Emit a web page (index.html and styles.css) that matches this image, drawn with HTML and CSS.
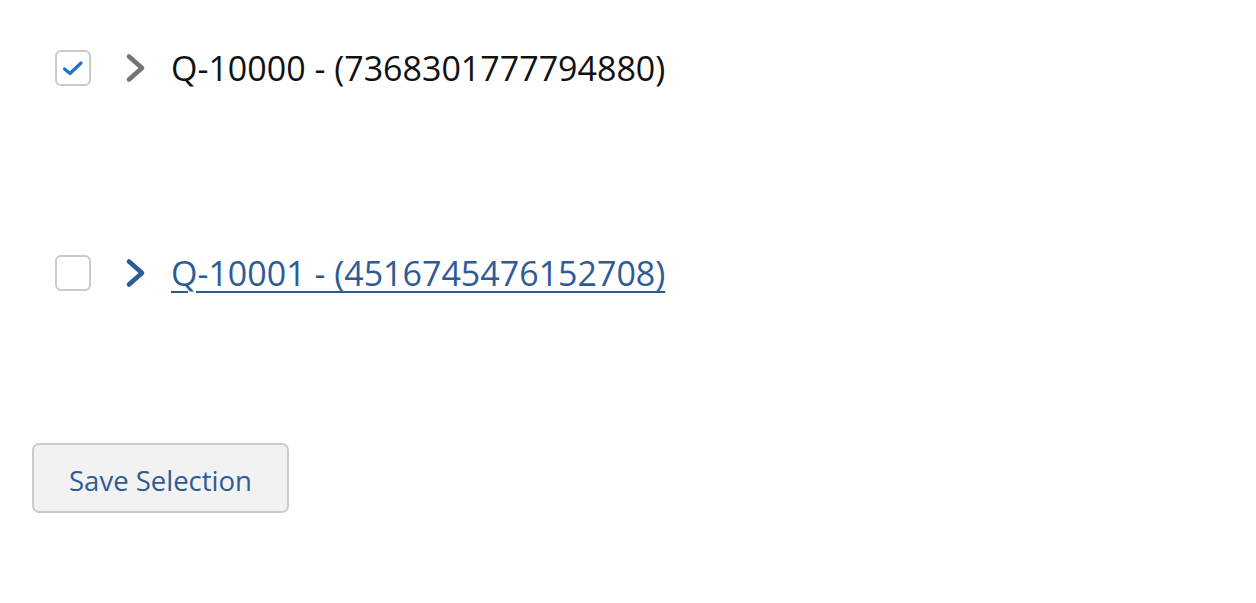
FILE: index.html
```html
<!DOCTYPE html>
<html>
<head>
<meta charset="utf-8">
<link rel="stylesheet" href="styles.css">
</head>
<body>
<div class="page">
  <ul class="tree">
    <li class="row">
      <span class="check checked">
        <svg width="22" height="18" viewBox="0 0 22 18"><path d="M2.5 10 L8 14.5 L19 4" fill="none" stroke="#1b72c8" stroke-width="3.2" stroke-linecap="round" stroke-linejoin="round"/></svg>
      </span>
      <span class="chev grey">
        <svg width="22" height="30" viewBox="0 0 22 30"><path d="M4 3.5 L17 15 L4 26.5" fill="none" stroke="currentColor" stroke-width="4.6" stroke-linecap="round" stroke-linejoin="round"/></svg>
      </span>
      <span class="label">Q-10000 - (7368301777794880)</span>
    </li>
    <li class="row">
      <span class="check"></span>
      <span class="chev blue">
        <svg width="22" height="30" viewBox="0 0 22 30"><path d="M4 3.5 L17 15 L4 26.5" fill="none" stroke="currentColor" stroke-width="4.6" stroke-linecap="round" stroke-linejoin="round"/></svg>
      </span>
      <a class="label link" href="#">Q-10001 - (4516745476152708)</a>
    </li>
  </ul>
  <button class="save">Save Selection</button>
</div>
</body>
</html>
```
FILE: styles.css
```css
html, body {
  margin: 0;
  padding: 0;
  background: #fff;
}
body {
  font-family: "Open Sans", "Noto Sans", sans-serif;
}
.page {
  padding: 50px 0 0 32px;
}
.tree {
  list-style: none;
  margin: 0;
  padding: 0 0 0 23px;
  display: flex;
  flex-direction: column;
  gap: 169px;
}
.row {
  display: flex;
  align-items: center;
  height: 36px;
}
.check {
  box-sizing: border-box;
  width: 36px;
  height: 36px;
  border: 2px solid #cbcbcb;
  border-radius: 6px;
  background: #fff;
  display: flex;
  align-items: center;
  justify-content: center;
  flex-shrink: 0;
}
.chev {
  margin-left: 34px;
  width: 22px;
  height: 30px;
  display: flex;
  flex-shrink: 0;
}
.chev.grey { color: #767676; }
.chev.blue { color: #2e5b97; }
.label {
  margin-left: 24px;
  font-size: 34px;
  line-height: 40px;
  color: #111;
  white-space: nowrap;
}
.link {
  color: #2e5b97;
  text-decoration: underline;
  text-decoration-thickness: 2px;
  text-underline-offset: 5px;
}
.save {
  margin-top: 152px;
  box-sizing: border-box;
  width: 257px;
  height: 70px;
  background: #f2f2f2;
  border: 2px solid #cbcbcb;
  border-radius: 7px;
  font-family: "Open Sans", "Noto Sans", sans-serif;
  font-size: 27.5px;
  color: #2e5b97;
  padding: 4px 0 0;
}
```
